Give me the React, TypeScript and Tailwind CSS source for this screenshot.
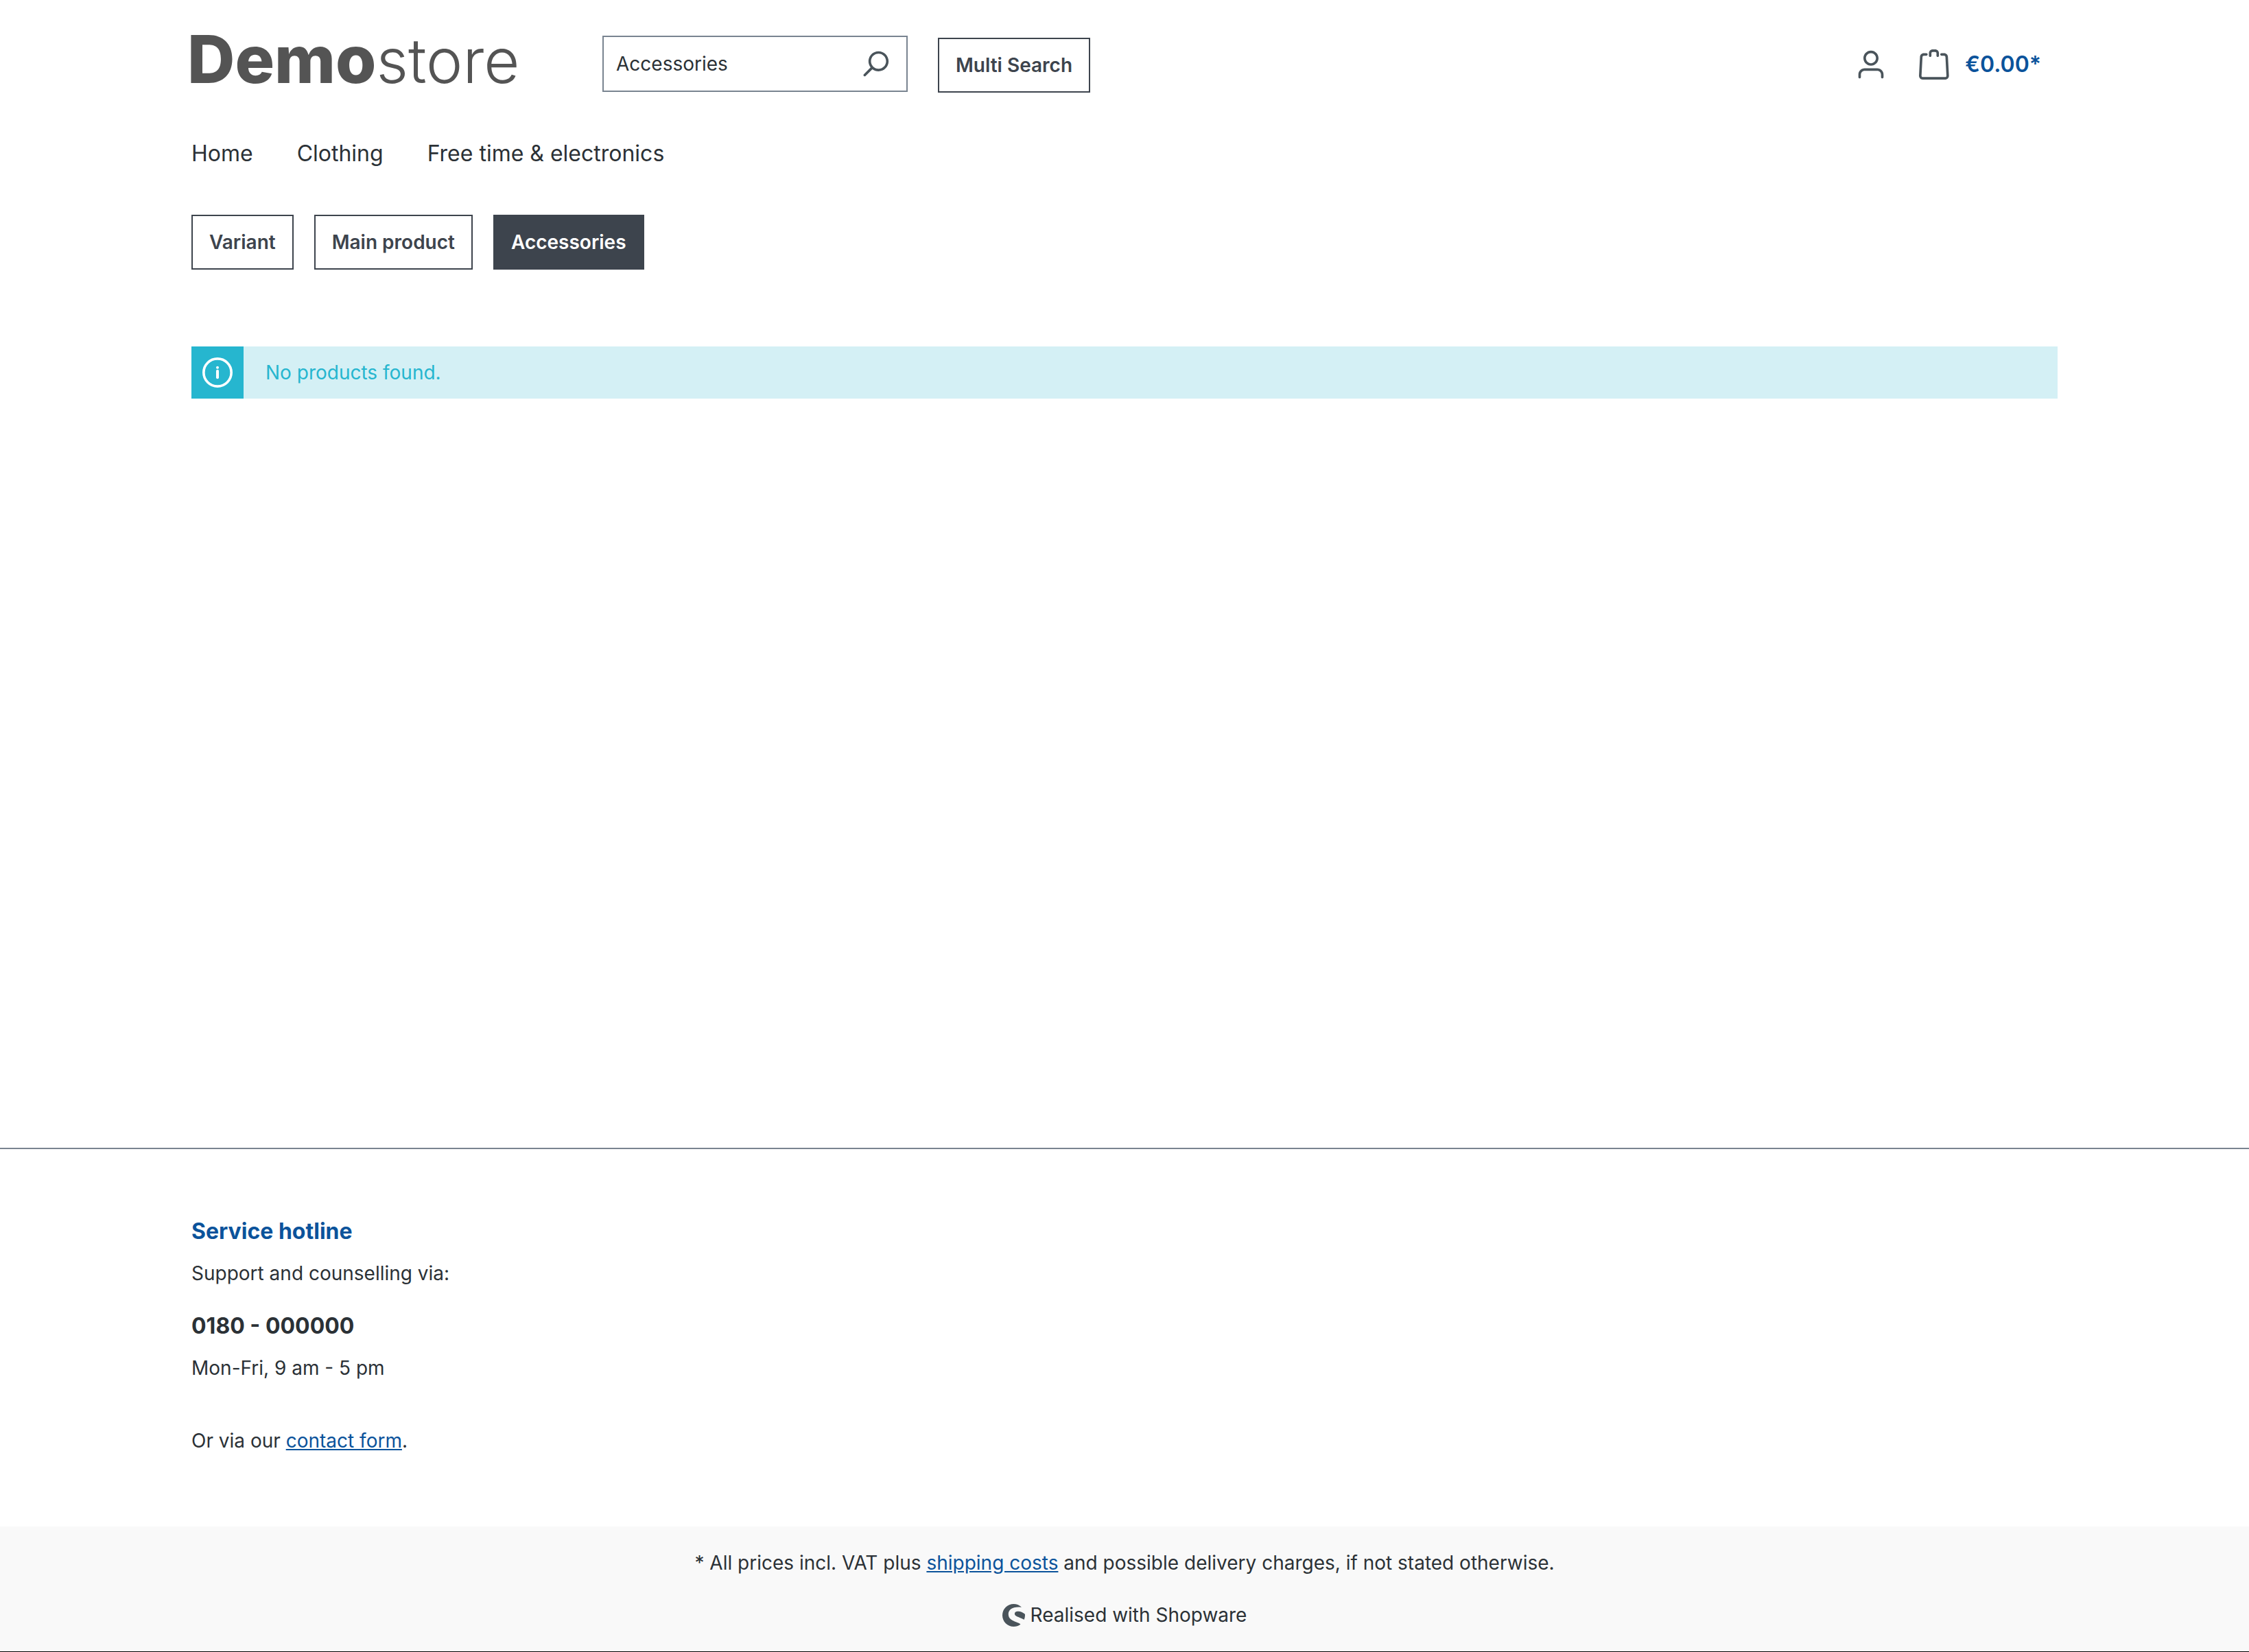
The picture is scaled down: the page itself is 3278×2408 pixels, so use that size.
import { SiShopware } from "react-icons/si";

function SearchIcon() {
  return (
    <svg viewBox="0 0 24 24" className="size-11 fill-[#4a545b]" aria-hidden="true">
      <path d="M10.0944 16.3199 4.707 21.707c-.3905.3905-1.0237.3905-1.4142 0-.3905-.3905-.3905-1.0237 0-1.4142L8.68 14.9056C7.6271 13.551 7 11.8487 7 10c0-4.4183 3.5817-8 8-8s8 3.5817 8 8-3.5817 8-8 8c-1.8487 0-3.551-.627-4.9056-1.6801zM15 16c3.3137 0 6-2.6863 6-6s-2.6863-6-6-6-6 2.6863-6 6 2.6863 6 6 6z" />
    </svg>
  );
}

function AvatarIcon() {
  return (
    <svg viewBox="0 0 24 24" className="size-11 fill-[#4a545b]" aria-hidden="true">
      <path d="M12 3C9.7909 3 8 4.7909 8 7c0 2.2091 1.7909 4 4 4 2.2091 0 4-1.7909 4-4 0-2.2091-1.7909-4-4-4zm0-2c3.3137 0 6 2.6863 6 6s-2.6863 6-6 6-6-2.6863-6-6 2.6863-6 6-6zM4 22.099c0 .5523-.4477 1-1 1s-1-.4477-1-1V20c0-2.7614 2.2386-5 5-5h10.0007c2.7614 0 5 2.2386 5 5v2.099c0 .5523-.4477 1-1 1s-1-.4477-1-1V20c0-1.6569-1.3431-3-3-3H7c-1.6569 0-3 1.3431-3 3v2.099z" />
    </svg>
  );
}

function BagIcon() {
  return (
    <svg viewBox="0 0 24 24" className="size-11 fill-[#4a545b]" aria-hidden="true">
      <path d="M5.892 3c.5523 0 1 .4477 1 1s-.4477 1-1 1H3.7895a1 1 0 0 0-.9986.9475l-.7895 15c-.029.5515.3946 1.0221.9987 1.0525h17.8102c.5523 0 1-.4477.9986-1.0525l-.7895-15A1 1 0 0 0 20.0208 5H17.892c-.5523 0-1-.4477-1-1s.4477-1 1-1h2.1288c1.5956 0 2.912 1.249 2.9959 2.8423l.7894 15c.0035.0788.0035.0788.0042.1577 0 1.6569-1.3432 3-3 3H3c-.079-.0007-.079-.0007-.1577-.0041-1.6546-.0871-2.9253-1.499-2.8382-3.1536l.7895-15C.8775 4.249 2.1939 3 3.7895 3H5.892zm4 2c0 .5523-.4477 1-1 1s-1-.4477-1-1V3c0-1.6569 1.3432-3 3-3h2c1.6569 0 3 1.3431 3 3v2c0 .5523-.4477 1-1 1s-1-.4477-1-1V3c0-.5523-.4477-1-1-1h-2c-.5523 0-1 .4477-1 1v2z" />
    </svg>
  );
}

function InfoIcon() {
  return (
    <svg viewBox="0 0 24 24" className="size-11" aria-hidden="true">
      <circle cx="12" cy="12" r="11" fill="none" stroke="white" strokeWidth="2" />
      <circle cx="12" cy="8" r="1.1" fill="white" />
      <path d="M12 10.8v5.1" fill="none" stroke="white" strokeWidth="2.2" strokeLinecap="round" />
    </svg>
  );
}

const filters = [
  { label: "Variant", active: false },
  { label: "Main product", active: false },
  { label: "Accessories", active: true },
];

const outline = "h-20 border-2 border-[#3d444d] px-6 font-semibold";

export default function App() {
  return (
    <div className="flex min-h-screen flex-col border-b border-black bg-white font-['Inter',sans-serif] text-[28px] leading-[42px] text-[#2b3136]">
      <div className="mx-auto w-full max-w-[2800px] px-10">
        <header className="flex h-[188px] items-start pt-[52px]">
          <a href="#home" className="-ml-[6px] w-[605px] text-[96px] leading-[68px] text-[#545454]">
            <span className="font-extrabold">Demo</span>
            <span className="text-[90px] font-light">store</span>
          </a>
          <form className="flex h-[82px] w-[445px] items-center border-2 border-[#798490] pr-6 pl-[18px]">
            <input
              type="search"
              aria-label="Search"
              defaultValue="Accessories"
              className="min-w-0 flex-1 appearance-none outline-none"
            />
            <button type="button" aria-label="Submit search">
              <SearchIcon />
            </button>
          </form>
          <button type="button" className={`${outline} mt-[3px] ml-11 text-[#3d444d]`}>
            Multi Search
          </button>
          <div className="mt-[18px] mr-6 ml-auto flex items-center gap-12">
            <button type="button" aria-label="Your account">
              <AvatarIcon />
            </button>
            <a href="#cart" className="flex items-center gap-[23px] text-[32px] leading-[48px] font-semibold text-[#0b539b]">
              <BagIcon />
              €0.00*
            </a>
          </div>
        </header>

        <nav className="flex h-[125px] items-start gap-16 pt-3 text-[32px] leading-[48px]">
          <a href="#home">Home</a>
          <a href="#clothing">Clothing</a>
          <a href="#free-time">Free time &amp; electronics</a>
        </nav>

        <main>
          <div className="flex gap-[30px]">
            {filters.map((f) => (
              <button
                key={f.label}
                type="button"
                aria-pressed={f.active}
                className={`${outline} ${f.active ? "bg-[#3d444d] text-white" : "text-[#3d444d]"}`}
              >
                {f.label}
              </button>
            ))}
          </div>
          <div role="alert" className="mt-28 flex h-[76px] items-center bg-[#d4f0f5] text-[#26b6cf]">
            <div className="flex size-[76px] items-center justify-center bg-[#26b6cf]">
              <InfoIcon />
            </div>
            <p className="pl-8">No products found.</p>
          </div>
        </main>
      </div>

      <footer className="mt-auto">
        <div className="border-t-2 border-[#798490]">
          <div className="mx-auto w-full max-w-[2800px] px-10 pt-24 pb-[104px]">
            <h2 className="text-[32px] leading-[48px] font-bold text-[#0b539b]">Service hotline</h2>
            <p className="mt-4">Support and counselling via:</p>
            <p className="mt-8 text-[32px] leading-[48px] font-bold">0180 - 000000</p>
            <p className="mt-4">Mon-Fri, 9 am - 5 pm</p>
            <p className="mt-16">
              Or via our{" "}
              <a href="#contact" className="text-[#0b539b] underline">
                contact form
              </a>
              .
            </p>
          </div>
        </div>
        <div className="bg-[#f9f9f9] py-8 text-center">
          <p>
            * All prices incl. VAT plus{" "}
            <a href="#shipping" className="text-[#0b539b] underline">
              shipping costs
            </a>{" "}
            and possible delivery charges, if not stated otherwise.
          </p>
          <p className="mt-[34px] flex items-center justify-center gap-2">
            <SiShopware className="size-[33px] text-[#4a545b]" aria-hidden="true" />
            Realised with Shopware
          </p>
        </div>
      </footer>
    </div>
  );
}
